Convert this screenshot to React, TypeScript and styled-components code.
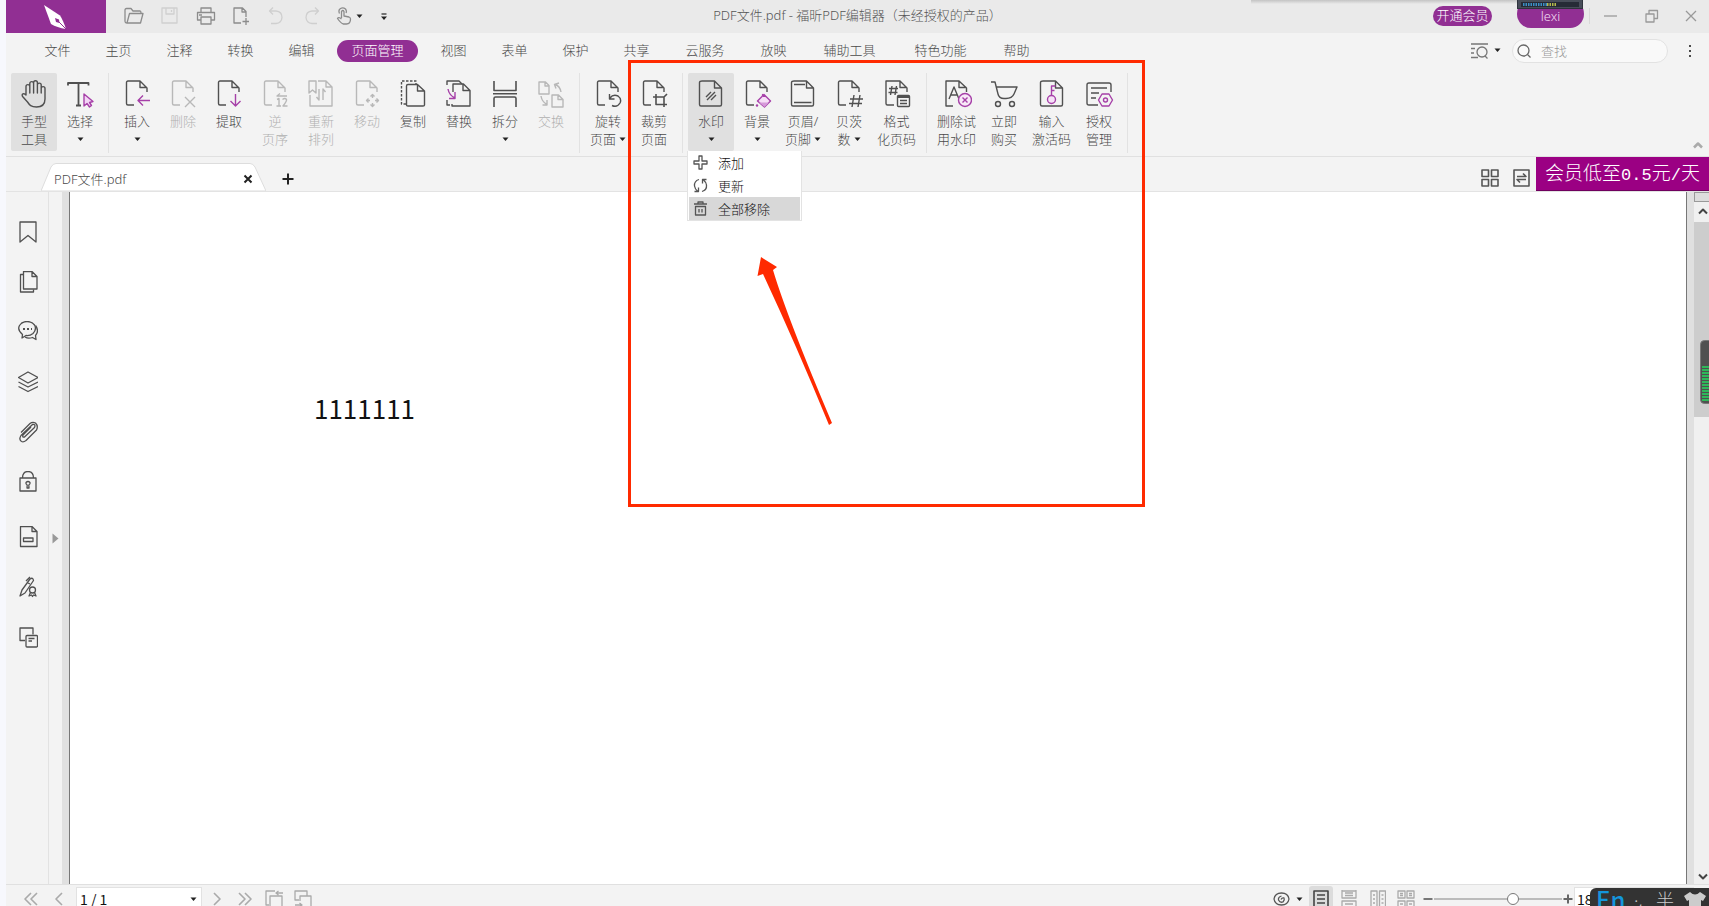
import React from "react";
import styled, { createGlobalStyle, css } from "styled-components";

const PURPLE = "#912f93";
const VIOLET = "#a640a8";
const INK = "#505050";
const RED = "#ff2a00";

const GlobalStyle = createGlobalStyle`
  *, *::before, *::after { box-sizing: border-box; }
  body {
    margin: 0;
    background: #f7f8fd;
    font: 300 13px/18px "Noto Sans", "Noto Sans CJK SC", sans-serif;
    color: #4a4a4a;
    overflow: hidden;
  }
  button, input, select { font: inherit; color: inherit; }
  button { border: 0; padding: 0; background: none; }
  svg { display: block; flex: none; }
`;

/* ---------- frame ---------- */

const Shell = styled.div`
  position: relative;
  display: flex;
  flex-direction: column;
  height: 100vh;
  padding-left: 6px;
  overflow: hidden;
`;

const TitleBar = styled.header`
  display: grid;
  grid-template-columns: 1fr auto 1fr;
  align-items: start;
  height: 33px;
  flex: none;
  background: #eaeaea;
`;

const TitleLeft = styled.div`
  display: flex;
  align-items: flex-start;
  height: 33px;
`;

const Logo = styled.div`
  display: flex;
  justify-content: center;
  align-items: center;
  width: 100px;
  height: 33px;
  margin-right: 10px;
  background: ${PURPLE};
`;

const QuickButton = styled.button<{ $faint?: boolean; $narrow?: boolean }>`
  display: flex;
  align-items: center;
  justify-content: center;
  gap: 4px;
  width: ${(p) => (p.$narrow ? 34 : 36)}px;
  height: 32px;
  color: ${(p) => (p.$faint ? "#cfcfcf" : "#8c8c8c")};
`;

const Title = styled.h1`
  margin: 0;
  font: inherit;
  line-height: 31px;
  color: #555;
`;

const TitleRight = styled.div`
  display: flex;
  justify-content: flex-end;
  align-items: center;
  height: 33px;
`;

const MemberButton = styled.button`
  width: 59px;
  height: 20px;
  margin: 0 25px 2px 0;
  padding-bottom: 2px;
  border-radius: 10px;
  background: ${PURPLE};
  color: #fff;
  line-height: 18px;
  white-space: nowrap;
`;

const UserBox = styled.div`
  position: relative;
  width: 67px;
  height: 33px;
  margin-right: 5px;
`;

const UserButton = styled.button`
  width: 67px;
  height: 28px;
  padding-top: 4px;
  border-radius: 14px;
  background: ${PURPLE};
  color: #f1dcf1;
`;

const Meter = styled.div`
  position: absolute;
  top: 0;
  left: 0;
  width: 66px;
  height: 9px;
  background: #474d59;
  border: 1px solid #2f343d;
  border-top: 0;
`;

const WindowControls = styled.div`
  display: flex;
  align-items: center;
  height: 16px;
  margin-bottom: 2px;
  border-left: 1px solid #d8d8d8;
  color: #999;
`;

const WindowButton = styled.button`
  display: flex;
  justify-content: center;
  align-items: center;
  width: 41px;
  height: 30px;
  &:last-child { width: 37px; }
`;

/* ---------- menu ---------- */

const MenuBar = styled.nav`
  display: flex;
  align-items: center;
  height: 37px;
  flex: none;
  padding: 0 12px 2px 21px;
  background: #f3f3f3;
  & > :nth-child(15) { margin-right: auto; }
`;

const MenuTab = styled.button<{ $chars: number; $active?: boolean }>`
  width: ${(p) => p.$chars * 15 + 31}px;
  flex: none;
  height: 22px;
  padding-bottom: 2px;
  line-height: 20px;
  white-space: nowrap;
  ${(p) => p.$active && css`
    width: 81px;
    margin: 0 5px;
    border-radius: 11px;
    background: ${PURPLE};
    color: #fff;
  `}
`;

const ScopeButton = styled.button`
  display: flex;
  align-items: center;
  gap: 6px;
  margin-right: 11px;
  color: #777;
`;

const SearchBox = styled.label`
  display: flex;
  align-items: center;
  gap: 10px;
  width: 156px;
  height: 24px;
  padding: 0 4px;
  border: 1px solid #e2e2e2;
  border-radius: 12px;
  background: #f9f9f9;
  color: #666;
`;

const SearchInput = styled.input`
  min-width: 0;
  flex: 1;
  border: 0;
  padding: 0;
  background: none;
  outline: 0;
  &::placeholder { color: #999; opacity: 1; }
`;

const MoreButton = styled.button`
  display: flex;
  justify-content: center;
  width: 14px;
  margin-left: 15px;
`;

/* ---------- ribbon ---------- */

const Ribbon = styled.div`
  position: relative;
  display: flex;
  height: 87px;
  flex: none;
  padding: 3px 5px 5px;
  background: #f3f3f3;
  border-bottom: 1px solid #e0e0e0;
`;

const Tool = styled.button<{ $on?: boolean; $off?: boolean; $wide?: boolean }>`
  display: flex;
  flex-direction: column;
  align-items: center;
  width: ${(p) => (p.$wide ? 49 : 46)}px;
  height: 78px;
  flex: none;
  padding-top: 7px;
  border-radius: 2px;
  background: ${(p) => (p.$on ? "#e0e0e0" : "none")};
  color: ${(p) => (p.$off ? "#b0b0b0" : "#4a4a4a")};
  white-space: nowrap;
`;

const ToolText = styled.span`
  display: flex;
  align-items: center;
  gap: 3px;
  height: 18px;
  &:nth-of-type(1) { margin-top: 4px; }
`;

const Divider = styled.span`
  width: 1px;
  height: 80px;
  margin: 0 5px;
  flex: none;
  background: #e2e2e2;
`;

const Anchor = styled.div`
  position: relative;
`;

const Popup = styled.div`
  position: absolute;
  top: 78px;
  left: -1px;
  z-index: 3;
  width: 115px;
  padding: 0 1px;
  background: #fff;
  border: 1px solid #e3e3e3;
  border-top: 0;
`;

const PopupItem = styled.button<{ $on?: boolean }>`
  display: flex;
  align-items: center;
  gap: 10px;
  width: 100%;
  height: 23px;
  padding-left: 4px;
  background: ${(p) => (p.$on ? "#d8d8d8" : "none")};
  color: #111;
  svg { color: #555; }
`;

const CollapseButton = styled.button`
  align-self: flex-end;
  margin: 0 0 2px auto;
  color: #aaa;
`;

/* ---------- document tabs ---------- */

const TabStrip = styled.div`
  display: flex;
  align-items: flex-end;
  height: 35px;
  flex: none;
  padding-left: 35px;
  background: #f3f3f3;
  border-bottom: 1px solid #e3e3e3;
`;

const DocTab = styled.div`
  position: relative;
  display: flex;
  align-items: center;
  justify-content: space-between;
  width: 225px;
  height: 28px;
  padding: 3px 13px 0 13px;
`;

const TabShape = styled.svg`
  position: absolute;
  inset: 0;
`;

const TabLabel = styled.span`
  position: relative;
`;

const TabClose = styled.button`
  position: relative;
  color: #222;
`;

const NewTab = styled.button`
  margin: 0 auto 6px 16px;
  color: #222;
`;

const StripButton = styled.button`
  margin: 0 14px 4px 0;
  color: #555;
  & + & { margin-right: 6px; }
`;

const Promo = styled.a`
  display: flex;
  justify-content: center;
  align-items: center;
  width: 173px;
  height: 34px;
  padding-top: 2px;
  background: #9b0083;
  border-bottom: 1px solid #6f005e;
  color: #fff;
  font-size: 19px;
  text-decoration: none;
  white-space: nowrap;
`;

const PromoLatin = styled.span`
  font: 17px "Liberation Mono", monospace;
`;

/* ---------- workspace ---------- */

const Workspace = styled.div`
  display: flex;
  flex: 1;
  min-height: 0;
`;

const SideBar = styled.aside`
  width: 43px;
  flex: none;
  padding-top: 15px;
  background: #f3f3f3;
  border-right: 1px solid #e2e2e2;
`;

const SideButton = styled.button<{ $spaced?: boolean }>`
  display: flex;
  justify-content: center;
  align-items: center;
  width: 43px;
  height: 50px;
  margin-top: ${(p) => (p.$spaced ? 5 : 0)}px;
  color: ${INK};
`;

const Gutter = styled.div`
  display: flex;
  width: 13px;
  flex: none;
  padding: 341px 0 0 3px;
  background: #f3f3f3;
`;

const PaneEdge = styled.div`
  width: 7px;
  flex: none;
  background: #e0e0e0;
`;

const Page = styled.main`
  flex: 1;
  min-width: 0;
  padding: 203px 0 0 244px;
  background: #fff;
  border: solid #777;
  border-width: 0 1px;
  color: #111;
  font: 400 26px/26px "Noto Sans CJK SC", sans-serif;
`;

const PageText = styled.p`
  margin: 0;
`;

const ScrollBar = styled.div`
  position: relative;
  display: flex;
  flex-direction: column;
  width: 15px;
  flex: none;
  background: #f0f0f0;
  color: #444;
`;

const SplitHandle = styled.div`
  height: 10px;
  flex: none;
  background: #ddd;
  border: 1px solid #999;
  border-right: 0;
`;

const ScrollButton = styled.button`
  display: flex;
  justify-content: center;
  align-items: center;
  width: 17px;
  height: 20px;
  flex: none;
  &:last-child { height: 17px; margin-top: auto; }
`;

const Thumb = styled.div`
  height: 195px;
  background: #cdcdcd;
`;

const LevelGauge = styled.svg`
  position: absolute;
  top: 148px;
  right: 0;
`;

/* ---------- status bar ---------- */

const StatusBar = styled.footer`
  height: 22px;
  flex: none;
  overflow: hidden;
  background: #f3f3f3;
  border-top: 1px solid #e0e0e0;
`;

const StatusRow = styled.div`
  display: flex;
  align-items: center;
  height: 28px;
  padding: 0 15px;
  color: #aaa;
`;

const StatusButton = styled.button<{ $w: number; $on?: boolean }>`
  display: flex;
  justify-content: center;
  align-items: center;
  gap: 6px;
  width: ${(p) => p.$w}px;
  height: 26px;
  flex: none;
  border-radius: 3px;
  background: ${(p) => (p.$on ? "#dcdcdc" : "none")};
  color: ${(p) => (p.$on ? "#444" : "inherit")};
`;

const PagePicker = styled.label`
  position: relative;
  display: flex;
  align-items: center;
  width: 126px;
  height: 24px;
  margin: 0 6px 0 0;
  background: #fff;
  border: 1px solid #e2e2e2;
  svg { position: absolute; right: 4px; }
`;

const PageSelect = styled.select`
  appearance: none;
  width: 100%;
  border: 0;
  padding: 0 3px;
  background: none;
  color: #111;
  font: 400 14px/20px "Noto Sans CJK SC", sans-serif;
`;

const StatusRight = styled.div`
  display: flex;
  align-items: center;
  margin-left: auto;
`;

const Zoom = styled.input`
  appearance: none;
  width: 128px;
  height: 14px;
  margin: 0;
  background: linear-gradient(#bbb, #bbb) center / 100% 2px no-repeat;
  &::-webkit-slider-thumb {
    appearance: none;
    width: 12px;
    height: 12px;
    border: 1px solid #777;
    border-radius: 50%;
    background: #fff;
  }
`;

const ZoomValue = styled.input`
  width: 120px;
  height: 24px;
  padding: 0 2px;
  border: 1px solid #e2e2e2;
  background: #fff;
  color: #111;
  font: 400 14px/20px "Noto Sans CJK SC", sans-serif;
`;

const InputMethodBar = styled.div`
  position: absolute;
  right: 0;
  bottom: -12px;
  z-index: 4;
  display: flex;
  align-items: flex-start;
  width: 119px;
  height: 30px;
  padding-left: 6px;
  overflow: hidden;
  border-radius: 6px 0 0 6px;
  background: #333;
  color: #ccc;
  font-size: 18px;
  line-height: 24px;
`;

const InputLanguage = styled.span`
  width: 38px;
  color: #1496dc;
  font: 500 24px/22px "Noto Sans CJK SC", sans-serif;
`;

const InputMark = styled.span`
  width: 22px;
`;

const InputWidth = styled.span`
  width: 27px;
`;

/* ---------- callout drawn over the window ---------- */

const Highlight = styled.div`
  position: absolute;
  z-index: 5;
  top: 60px;
  left: 628px;
  width: 517px;
  height: 447px;
  border: 3px solid ${RED};
  pointer-events: none;
`;

const Pointer = styled.svg`
  position: absolute;
  top: 194px;
  left: 126px;
`;

const WindowShade = styled.div`
  position: absolute;
  top: 0;
  right: 192px;
  width: 266px;
  height: 4px;
  background: linear-gradient(#c4c4c4, #eaeaea);
`;

/* ---------- icons ---------- */

type IconProps = { w?: number; h?: number; sw?: number; children: React.ReactNode };

const Icon = ({ w = 20, h = 20, sw = 1.3, children }: IconProps) => (
  <svg width={w} height={h} viewBox={`0 0 ${w} ${h}`} fill="none" stroke="currentColor" strokeWidth={sw} strokeLinejoin="round" aria-hidden="true">
    {children}
  </svg>
);

const Caret = ({ color = "#222" }: { color?: string }) => (
  <svg width="7" height="5" viewBox="0 0 7 5" aria-hidden="true"><path d="M0.500 0.500H6.500L3.500 4Z" fill={color} /></svg>
);

const OPEN_DOC = "M12 25H6Q4.500 25 4.500 23.500V2.500Q4.500 1 6 1H18L25 8V12M18 1V7.500H25";
const FULL_DOC = "M6 1H18.500L25.500 8V24.500Q25.500 26 24 26H5Q3.500 26 3.500 24.500V2.500Q3.500 1 6 1ZM18.500 1V8H25.500";

const toolIcons: Record<string, React.ReactNode> = {
  hand: <path d="M7 15V6.500a1.900 1.900 0 0 1 3.800 0V13V3.500a1.900 1.900 0 0 1 3.800 0V13V2.700a1.900 1.900 0 0 1 3.800 0V13V5a1.900 1.900 0 0 1 3.800 0V13V8.500a1.900 1.900 0 0 1 3.800 0V19c0 5-3 8-8.500 8C12 27 10.500 25 8.500 22L3.600 16.500C2 14 5 12.500 7 15Z" />,
  select: <><path strokeWidth="1.8" d="M3 5.500V3H23.500V5.500M13.500 3V25.500M11 25.500H16" /><path d="M19 14V26L22 23.500L24.500 27L26.500 25.500L24.500 22.500L28 21.500Z" fill="#f3d4f5" stroke={VIOLET} /></>,
  insert: <><path d={OPEN_DOC} /><path d="M28 20.500H16M21 15.500L16 20.500L21 25.500" stroke={VIOLET} /></>,
  remove: <><path d={OPEN_DOC} /><path d="M17 17L27 27M27 17L17 27" /></>,
  extract: <><path d={OPEN_DOC} /><path d="M21.500 14V26M16.500 21L21.500 26L26.500 21" stroke={VIOLET} /></>,
  reverse: <><path d={OPEN_DOC} /><path d="M27 16H17L20 13.500M17 19.500L19 18.500V26M16.500 26H21M22.500 19.500Q25 17.500 26.500 19.500Q27 21 23 26H27.500" /></>,
  rearrange: <><path d="M3 1H10V13L6.500 10L3 13ZM12 1H20L26 7V26H4V15M20 1V7H26" /><path d="M13 9V20L10.500 17M17 20V9L19.500 12" /></>,
  move: <><path d={OPEN_DOC} /><path d="M18.500 16.500L20.500 14.500L22.500 16.500M18.500 24.500L20.500 26.500L22.500 24.500M16.500 18.500L14.500 20.500L16.500 22.500M24.500 18.500L26.500 20.500L24.500 22.500M20.500 15V18M20.500 23V26M15 20.500H18M23 20.500H26" /></>,
  copy: <><path strokeDasharray="2.5 1.500" d="M8 24H3.500V1H18V4" /><path d="M10 4.500H19.500L26.500 11V25Q26.500 26 25 26H10Q8.500 26 8.500 25V6Q8.500 4.500 10 4.500ZM19.500 4.500V11H26.500" /></>,
  replace: <><path d="M3 5V1H15L18 4M3 20V25H6" /><path d="M9 12V4H19.500L26 10.500V26H8V24M19 4V10.500H26" /><path d="M4 9Q5 15 11 18M11 12V18.500H5" stroke={VIOLET} /></>,
  split: <><path d="M4 1V10.500H26V1M4 27V18.500Q4 17 5.500 17H24.500Q26 17 26 18.500V27M3 13.700H27" strokeWidth="1.600" /></>,
  swap: <><path d="M3 2H9.500L13 5.500V14H3ZM9 2V6H13M16 15H22.500L27 19.500V27H16ZM22 15V19.500H27" /><path d="M25 12Q24 6 19 4.500M23 3L18.500 4.500L20 8.500M5 16Q6 22 11 24.500M11 20V25H6.500" /></>,
  rotate: <><path d={OPEN_DOC} /><path d="M17 18Q20 14 25 16Q29 19 27 23Q24 28 19 25.500M16.500 14V19H21.500" /></>,
  crop: <><path d={OPEN_DOC} /><path strokeWidth="1.600" d="M14 17H25V27M17 14V24.500H28M25 17L28 14" /></>,
  watermark: <><path d={FULL_DOC} /><path d="M10 17L15 12M11 20L19 12M15 20L20 15" /></>,
  background: <><path d={OPEN_DOC} /><path d="M15.500 21L22 14.500L28.500 21L22.500 27ZM20 14.500L24 16.500" fill="#f6dff7" stroke={VIOLET} /><path d="M17 22.500H27L22.500 27Z" fill="#d69ada" stroke="none" /><circle cx="15" cy="25.500" r="1.200" fill={VIOLET} stroke="none" /></>,
  header: <><path d={FULL_DOC} /><path strokeWidth="1.600" d="M6 4.500H17M6 22.500H23.500" /></>,
  bates: <><path d={OPEN_DOC} /><path d="M20 15L18 27M26 15L24 27M16 19H29M15 23.500H28" /></>,
  pageFormat: <><path d="M12 25H5.500Q4 25 4 23.500V1H18L25 8V12M18 1V7.500H25" /><path d="M10 6L8.500 15M14.500 6L13 15M7 8.500H16M6.500 12.500H15.500" /><rect x="15.500" y="15.500" width="12" height="11" rx="1" /><path strokeWidth="2" d="M16 17H27" /><path d="M18 20.500H25M18 23.500H25" /></>,
  trial: <><path d="M11 26H4V1H17L24.500 8V12M17 1V7.500H24.500" /><path d="M7 19L12 7L17 19M9 15H15" /><circle cx="23" cy="20" r="6.500" stroke={VIOLET} fill="#f8e8f8" /><path stroke={VIOLET} d="M20.500 17.500L25.500 22.500M25.500 17.500L20.500 22.500" /></>,
  cart: <><path d="M2 2H6L9 14Q10 18.500 15 18.500H17Q23 18.500 25 14L28 7H7.500" /><circle cx="9" cy="24" r="2.500" /><circle cx="23" cy="24" r="2.500" /></>,
  key: <><path d={FULL_DOC} /><g stroke={VIOLET}><circle cx="14.500" cy="19.500" r="4" fill="#f6e2f7" /><path d="M14.500 15.500V6H18.500M14.500 10.500H17.500" /></g></>,
  license: <><path d="M14 25H5Q3 25 3 23V5Q3 3 5 3H25Q27 3 27 5V12M7 8H23M7 13H15M7 18H12" /><path d="M18 14H25L28.500 20L25 26H18L14.500 20Z" fill="#f3f3f3" stroke={VIOLET} /><circle cx="21.500" cy="20" r="2" stroke={VIOLET} /></>,
};

const sideIcons: { name: string; art: React.ReactNode; spaced?: boolean }[] = [
  { name: "书签", art: <path d="M2 1H18V21L10 14.500L2 21Z" /> },
  { name: "页面", art: <><path d="M5.500 0.500H14L19 5.500V18H5.500ZM14 0.500V5.500H19" /><path d="M5 3.500H2.500V21H15.500V18.500" /></> },
  { name: "注释", art: <><path d="M4.500 13.500Q-1 9 1.500 4.500Q4 0.500 9 0.500Q14 0.500 16.500 4Q19 8.500 15 12.500Q12 15 8 14.500L4 17Z" /><path d="M17.500 4.500Q21.500 10 17.500 14.500L18 18.500L14.500 16.500Q10 18 7 16" /><path strokeDasharray="2 2" strokeWidth="2" d="M5 8H14" /></> },
  { name: "图层", art: <><path d="M10 1L20 6.500L10 12L0.500 6.500ZM0.500 11L10 16L20 11M0.500 15.500L10 20.500L20 15.500" /></> },
  { name: "附件", art: <path d="M13 6L5 14Q4 16.500 6.500 16L16.500 6.500Q18 3 14.500 3.500L3 14.500Q0.500 18.500 3.500 20.500Q5.500 21.500 8 19.500L18.500 9Q20.500 5 17.500 2Q14.500 0.500 12 2.500L3 11.500" /> },
  { name: "安全", art: <><path d="M2 7H18V20H2ZM4.500 7Q4.500 0.500 10 0.500Q15.500 0.500 15.500 7" /><path d="M9 17L9.200 14Q7.500 13 8 11.500Q10 9.500 12 11.500Q12.500 13 10.800 14L11 17Z" /></> },
  { name: "域", spaced: true, art: <><path d="M2.500 0.500H14L19 5.500V20.500H2.500ZM14 0.500V5.500H19" /><path d="M5.500 12H15V15.500H5.500Z" /></> },
  { name: "签名", art: <><path d="M2 20L4 14L12 3Q15 1 15.500 4.500L7 17ZM8 5L12 1M10 7L12 8" /><circle cx="14.500" cy="14" r="3" /><path d="M12.500 16.500L11 20L13.500 19L14.500 20.500L15.500 19L18 20L16.500 16.500" /></> },
  { name: "文章", art: <><path d="M7 14.500H2V2H15V8.500" /><rect x="8" y="9.500" width="11.500" height="11.500" rx="1" /><path d="M10.500 12.500H16.500M10.500 15H14" /></> },
];

const menus = ["文件", "主页", "注释", "转换", "编辑", "页面管理", "视图", "表单", "保护", "共享", "云服务", "放映", "辅助工具", "特色功能", "帮助"];

type ToolDef = { icon: string; lines: string[]; on?: boolean; off?: boolean; wide?: boolean; drop?: boolean; menu?: boolean };

const groups: ToolDef[][] = [
  [{ icon: "hand", lines: ["手型", "工具"], on: true }, { icon: "select", lines: ["选择"], drop: true }],
  [
    { icon: "insert", lines: ["插入"], drop: true },
    { icon: "remove", lines: ["删除"], off: true },
    { icon: "extract", lines: ["提取"] },
    { icon: "reverse", lines: ["逆", "页序"], off: true },
    { icon: "rearrange", lines: ["重新", "排列"], off: true },
    { icon: "move", lines: ["移动"], off: true },
    { icon: "copy", lines: ["复制"] },
    { icon: "replace", lines: ["替换"] },
    { icon: "split", lines: ["拆分"], drop: true },
    { icon: "swap", lines: ["交换"], off: true },
  ],
  [{ icon: "rotate", lines: ["旋转", "页面"], drop: true }, { icon: "crop", lines: ["裁剪", "页面"] }],
  [
    { icon: "watermark", lines: ["水印"], on: true, drop: true, menu: true },
    { icon: "background", lines: ["背景"], drop: true },
    { icon: "header", lines: ["页眉/", "页脚"], drop: true },
    { icon: "bates", lines: ["贝茨", "数"], drop: true },
    { icon: "pageFormat", lines: ["格式", "化页码"], wide: true },
  ],
  [
    { icon: "trial", lines: ["删除试", "用水印"], wide: true },
    { icon: "cart", lines: ["立即", "购买"] },
    { icon: "key", lines: ["输入", "激活码"], wide: true },
    { icon: "license", lines: ["授权", "管理"] },
  ],
];

const ToolButton = ({ icon, lines, on, off, wide, drop }: ToolDef) => (
  <Tool $on={on} $off={off} $wide={wide} disabled={off}>
    <Icon w={30} h={28} sw={1.4}><g stroke={off ? "#b8b8b8" : INK}>{toolIcons[icon]}</g></Icon>
    <ToolText>{lines[0]}</ToolText>
    {lines[1] && <ToolText>{lines[1]}{drop && <Caret />}</ToolText>}
    {!lines[1] && drop && <ToolText><Caret /></ToolText>}
  </Tool>
);

const WatermarkMenu = () => (
  <Popup>
    <PopupItem><Icon w={15} h={15}><path d="M6 1H9V6H14V9H9V14H6V9H1V6H6Z" /></Icon>添加</PopupItem>
    <PopupItem><Icon w={15} h={15}><path d="M6 1.500Q1 3 1.500 8Q2 11 4.500 13M1.500 13.500H5.500V9.500M9 13.500Q14 12 13.500 7Q13 4 10.500 2M13.500 1.500H9.500V5.500" /></Icon>更新</PopupItem>
    <PopupItem $on><Icon w={15} h={15}><path d="M1 3H14M5 3V1H10V3M2.500 5.500V14H12.500V5.500ZM6 8V11.500M9 8V11.500" /></Icon>全部移除</PopupItem>
  </Popup>
);

const Chevrons = ({ d, w }: { d: string; w: number }) => <Icon w={w} h={14} sw={1.600}><path d={d} /></Icon>;

export default function App() {
  return (
    <Shell>
      <GlobalStyle />
      <TitleBar>
        <TitleLeft>
          <Logo>
            <svg width="24" height="26" viewBox="0 0 24 26" aria-hidden="true">
              <path d="M0 1L16 11.500Q19 16 22 25Q13 23.500 7 20Z" fill="#fff" />
              <path d="M22 25L14.500 17.500" stroke={PURPLE} strokeWidth="1" />
              <path d="M11 14L15 15.500L15.500 19L12 18Z" fill={PURPLE} />
            </svg>
          </Logo>
          <QuickButton aria-label="打开"><Icon><path d="M3 17Q1 17 1 15V4Q1 2.500 2.500 2.500H7L9 5H16Q17 5 17 7M3 17L5.500 7.500H19L16.500 17Z" /></Icon></QuickButton>
          <QuickButton $faint aria-label="保存"><Icon><path d="M2 2H17V17H2ZM6 2V8H14V2M11.500 4V6" /></Icon></QuickButton>
          <QuickButton aria-label="打印"><Icon><path d="M5 6V2H15V6M5 14H1.500V6.500H18.500V14H15M5 11H15V18H5ZM3 9H6" /></Icon></QuickButton>
          <QuickButton aria-label="新建"><Icon><path d="M9 17H2V2H10.500L14 5.500V11M10 2V6H14M14 12V19M10.500 15.500H17" /></Icon></QuickButton>
          <QuickButton $faint aria-label="撤销"><Icon><path d="M5 1.500L1.500 5L5 8.500M1.500 5H8Q14 5.500 14 11.500Q13.500 17 8 17.500H3" /></Icon></QuickButton>
          <QuickButton $faint aria-label="重做"><Icon><path d="M11 1.500L14.500 5L11 8.500M14.500 5H8Q2 5.500 2 11.500Q2.500 17 8 17.500H13" /></Icon></QuickButton>
          <QuickButton $narrow aria-label="触摸模式">
            <Icon w={16} h={18}><path d="M5.500 11V4.500Q6.800 2.500 8 4.500V9L13 10Q14.500 10.500 14.500 12Q14.500 17 10.500 17H7.500Q5 16.500 1.500 11.500Q2.500 9.500 5.500 12M3.500 6.500Q2 3 4.500 1.500Q7 0 9.500 2Q11 4 10 6" /></Icon>
            <Caret />
          </QuickButton>
          <QuickButton aria-label="自定义快速访问"><Icon w={8} h={10}><path d="M1.500 3H6.500" stroke="#333" /><path d="M1 5.500H7L4 9Z" fill="#222" stroke="none" /></Icon></QuickButton>
        </TitleLeft>
        <Title>PDF文件.pdf - 福昕PDF编辑器（未经授权的产品）</Title>
        <TitleRight>
          <MemberButton>开通会员</MemberButton>
          <UserBox>
            <UserButton>lexi</UserButton>
            <Meter>
              <svg width="64" height="8" viewBox="0 0 64 8" aria-hidden="true">
                <rect x="3" y="2" width="58" height="5" fill="#262b36" />
                <path d="M5 4.500H29" stroke="#3b8fc4" strokeWidth="3" strokeDasharray="1.500 1" />
                <path d="M29 4.500H39" stroke="#b5b94a" strokeWidth="3" strokeDasharray="1.500 1" />
              </svg>
            </Meter>
          </UserBox>
          <WindowControls>
            <WindowButton aria-label="最小化"><Icon w={14} h={14}><path d="M0 7H13" /></Icon></WindowButton>
            <WindowButton aria-label="还原"><Icon w={14} h={14}><path d="M1 5H9V13H1ZM4 5V1.500H12.500V9.500H9" /></Icon></WindowButton>
            <WindowButton aria-label="关闭"><Icon w={12} h={12}><path d="M1 1L11 11M11 1L1 11" /></Icon></WindowButton>
          </WindowControls>
        </TitleRight>
      </TitleBar>

      <MenuBar>
        {menus.map((m) => <MenuTab key={m} $chars={m.length} $active={m === "页面管理"}>{m}</MenuTab>)}
        <ScopeButton aria-label="搜索范围">
          <Icon w={18} h={16}><path d="M1 1H18M1 5.500H5M1 10H4M1 14.500H8M15 13L17.500 15.500" /><circle cx="12" cy="9" r="5" /></Icon>
          <Caret />
        </ScopeButton>
        <SearchBox>
          <Icon w={14} h={14}><circle cx="6.500" cy="6.500" r="5.500" /><path d="M10.500 10.500L13.500 13.500" /></Icon>
          <SearchInput placeholder="查找" aria-label="查找" />
        </SearchBox>
        <MoreButton aria-label="更多"><Icon w={4} h={14}><path d="M2 1V14" strokeWidth="2" strokeDasharray="2 3" /></Icon></MoreButton>
      </MenuBar>

      <Ribbon>
        {groups.map((group, i) => (
          <React.Fragment key={i}>
            {group.map((t) => t.menu
              ? <Anchor key={t.icon}><ToolButton {...t} /><WatermarkMenu /></Anchor>
              : <ToolButton key={t.icon} {...t} />)}
            <Divider />
          </React.Fragment>
        ))}
        <CollapseButton aria-label="折叠功能区"><Icon w={12} h={8} sw={2.500}><path d="M2 6.500L6 2.500L10 6.500" /></Icon></CollapseButton>
      </Ribbon>

      <TabStrip>
        <DocTab>
          <TabShape width="225" height="28" viewBox="0 0 225 28" aria-hidden="true">
            <path d="M0 28L10 4Q12 0.500 15 0.500H209Q212 0.500 214 4L225 28Z" fill="#fff" stroke="#ddd" />
          </TabShape>
          <TabLabel>PDF文件.pdf</TabLabel>
          <TabClose aria-label="关闭标签"><Icon w={10} h={10} sw={2}><path d="M1.500 1.500L8.500 8.500M8.500 1.500L1.500 8.500" /></Icon></TabClose>
        </DocTab>
        <NewTab aria-label="新标签"><Icon w={12} h={12} sw={2}><path d="M6 0.500V11.500M0.500 6H11.500" /></Icon></NewTab>
        <StripButton aria-label="缩略图"><Icon w={18} h={18} sw={1.600}><path d="M1 1H7.500V7.500H1ZM10.500 1H17V7.500H10.500ZM1 10.500H7.500V17H1ZM10.500 10.500H17V17H10.500Z" /></Icon></StripButton>
        <StripButton aria-label="切换"><Icon w={17} h={18} sw={1.600}><path d="M1 1H16V17H1ZM4 7.500H13L10 4.500M13 10.500H4L7 13.500" /></Icon></StripButton>
        <Promo href="#member"><span>会员低至<PromoLatin>0.5</PromoLatin>元<PromoLatin>/</PromoLatin>天</span></Promo>
      </TabStrip>

      <Workspace>
        <SideBar>
          {sideIcons.map((s) => (
            <SideButton key={s.name} $spaced={s.spaced} aria-label={s.name}><Icon w={20} h={22}>{s.art}</Icon></SideButton>
          ))}
        </SideBar>
        <Gutter><svg width="7" height="11" viewBox="0 0 7 11" aria-hidden="true"><path d="M0.500 0.500L6.500 5.500L0.500 10.500Z" fill="#999" /></svg></Gutter>
        <PaneEdge />
        <Page><PageText>1111111</PageText></Page>
        <PaneEdge />
        <ScrollBar>
          <SplitHandle />
          <ScrollButton aria-label="向上滚动"><Icon w={10} h={8} sw={2}><path d="M1 5.500L5 1.500L9 5.500" /></Icon></ScrollButton>
          <Thumb />
          <LevelGauge width="9" height="64" viewBox="0 0 9 64" aria-hidden="true">
            <rect x="0.500" y="0.500" width="14" height="63" rx="4" fill="#505050" stroke="#777" />
            <path d="M5.500 26V61" stroke="#2fb85a" strokeWidth="7" strokeDasharray="2 1" />
          </LevelGauge>
          <ScrollButton aria-label="向下滚动"><Icon w={10} h={8} sw={2}><path d="M1 2.500L5 6.500L9 2.500" /></Icon></ScrollButton>
        </ScrollBar>
      </Workspace>

      <StatusBar>
        <StatusRow>
          <StatusButton $w={20} aria-label="首页"><Chevrons w={14} d="M7 1L1 7L7 13M13 1L7 7L13 13" /></StatusButton>
          <StatusButton $w={35} aria-label="上一页"><Chevrons w={8} d="M7 1L1 7L7 13" /></StatusButton>
          <PagePicker>
            <PageSelect aria-label="页码"><option>1 / 1</option></PageSelect>
            <Caret />
          </PagePicker>
          <StatusButton $w={18} aria-label="下一页"><Chevrons w={8} d="M1 1L7 7L1 13" /></StatusButton>
          <StatusButton $w={38} aria-label="末页"><Chevrons w={14} d="M1 1L7 7L1 13M7 1L13 7L7 13" /></StatusButton>
          <StatusButton $w={20} aria-label="上一视图"><Icon w={18} h={18}><path d="M4 15H1V1H10M5 6H17V18H5ZM18 3H11M13.500 1L11 3L13.500 5" /></Icon></StatusButton>
          <StatusButton $w={38} aria-label="下一视图"><Icon w={18} h={18}><path d="M5 10H1V1H13V6M6 11V6H17V17H9M1 15H8M5.500 13L8 15L5.500 17" /></Icon></StatusButton>
          <StatusRight>
            <StatusButton $w={42} aria-label="阅读模式">
              <Icon w={17} h={14}><path d="M1 7Q2 1 8.500 1Q15 1 16 7Q15 13 8.500 13Q2 13 1 7Z" stroke="#555" /><path d="M8.500 4Q5 5 5.500 8Q7 11 10 10Q12 8 11 6Q9 5.500 8 7.500" stroke="#555" /></Icon>
              <Caret />
            </StatusButton>
            <StatusButton $w={24} $on aria-label="单页"><Icon w={16} h={18} sw={1.600}><path d="M1 1H15V17H1ZM4 5H12M4 9H12M4 13H12" /></Icon></StatusButton>
            <StatusButton $w={32} aria-label="连续"><Icon w={16} h={18}><path d="M1 0V8H15V0M1 18V11H15V18M4 3H12M4 5.500H12M4 14H12M1 1H15" /></Icon></StatusButton>
            <StatusButton $w={25} aria-label="双页"><Icon w={16} h={18}><path d="M1 1H7V17H1ZM9.500 1H15.500V17H9.500ZM3 5H5M3 9H5M3 13H5M11.500 5H13.500M11.500 9H13.500M11.500 13H13.500" /></Icon></StatusButton>
            <StatusButton $w={32} aria-label="双页连续"><Icon w={18} h={18}><path d="M1 1H8V8H1ZM10 1H17V8H10ZM1 11H8V18H1ZM10 11H17V18H10ZM3 3.500H6M3 5.500H6M12 3.500H15M12 5.500H15M3 14H6M12 14H15" /></Icon></StatusButton>
            <StatusButton $w={12} aria-label="缩小"><Icon w={10} h={10} sw={2}><path d="M0.500 5H9.500" stroke="#777" /></Icon></StatusButton>
            <Zoom type="range" min="0" max="100" defaultValue="63" aria-label="缩放" />
            <StatusButton $w={12} aria-label="放大"><Icon w={10} h={10} sw={2}><path d="M0.500 5H9.500M5 0.500V9.500" stroke="#666" /></Icon></StatusButton>
            <ZoomValue defaultValue="185.75%" aria-label="缩放比例" />
          </StatusRight>
        </StatusRow>
      </StatusBar>

      <InputMethodBar>
        <InputLanguage>En</InputLanguage>
        <InputMark>·,</InputMark>
        <InputWidth>半</InputWidth>
        <svg width="24" height="22" viewBox="0 0 24 22" aria-hidden="true"><path d="M7 4Q12 9 17 4L23 8L20 13L18 12V22H6V12L4 13L1 8Z" fill="#ccc" /></svg>
      </InputMethodBar>

      <WindowShade />
      <Highlight>
        <Pointer width="80" height="172" viewBox="0 0 80 172" aria-hidden="true">
          <path d="M4 0L20 10L16 13Q30 60 75 166L72 168Q40 90 6 17L0.500 19Z" fill={RED} />
        </Pointer>
      </Highlight>
    </Shell>
  );
}
